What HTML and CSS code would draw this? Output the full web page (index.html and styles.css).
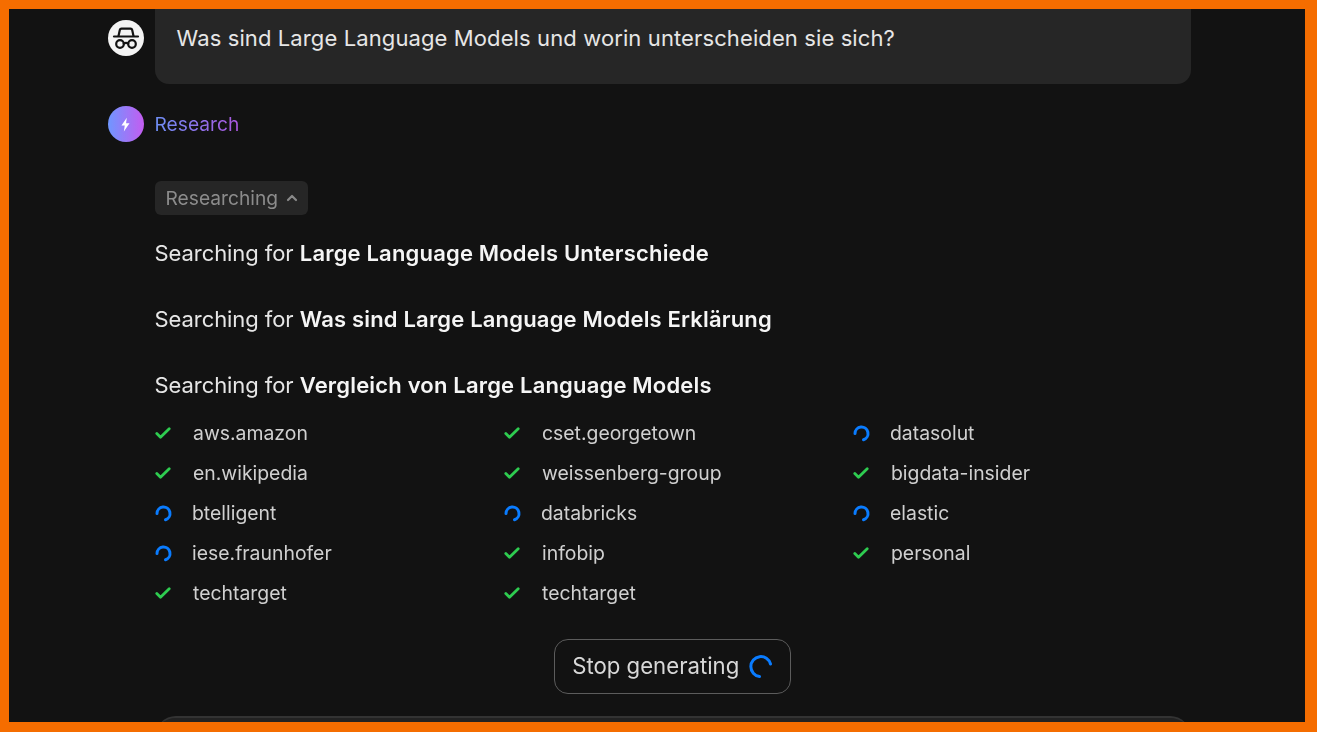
FILE: index.html
```html
<!DOCTYPE html>
<html lang="en">
<head>
  <meta charset="UTF-8" />
  <meta name="viewport" content="width=device-width, initial-scale=1.0" />
  <title>Research</title>
  <link rel="stylesheet" href="styles.css">
</head>
<body>
  <div class="frame">
    <div class="thread">
      <div class="row">
        <div class="avatar avatar-user">
          <svg width="36" height="36" viewBox="0 0 36 36" fill="none" stroke="#121212" stroke-width="2.2" stroke-linecap="round" stroke-linejoin="round">
            <path d="M6 16.500h24" />
            <path d="M10.500 16l1.300-6c.2-.9.8-1.300 1.700-1.300h9c.9 0 1.500.4 1.700 1.300l1.300 6" />
            <circle cx="12" cy="24" r="3.800" />
            <circle cx="24" cy="24" r="3.800" />
            <path d="M15.800 23.500c1.400-.8 3-.8 4.400 0" />
          </svg>
        </div>
        <div class="bubble">Was sind Large Language Models und worin unterscheiden sie sich?</div>
      </div>

      <div class="row row-center answer-head">
        <div class="avatar avatar-bot">
          <svg width="11" height="15" viewBox="0 0 12 16" fill="#fff"><path d="M7.400 0.500L1.600 9h3.600l-1 6.500L10.400 6.600H6.600z" /></svg>
        </div>
        <span class="mode">Research</span>
      </div>

      <div class="answer">
        <div class="chip">Researching
          <svg width="14" height="14" viewBox="0 0 14 14" fill="none" stroke="#8a8a8a" stroke-width="2.2" stroke-linecap="round" stroke-linejoin="round"><path d="M3 9l4-4 4 4" /></svg>
        </div>
        <p class="query"><span>Searching for</span> <b>Large Language Models Unterschiede</b></p>
        <p class="query"><span>Searching for</span> <b>Was sind Large Language Models Erklärung</b></p>
        <p class="query"><span>Searching for</span> <b>Vergleich von Large Language Models</b></p>

        <ul class="sources">
          <li><svg class="check" viewBox="0 0 16 12"><path d="M1.800 6.500l3.700 3.700 8.700-8.400" /></svg>aws.amazon</li>
          <li><svg class="check" viewBox="0 0 16 12"><path d="M1.800 6.500l3.700 3.700 8.700-8.400" /></svg>cset.georgetown</li>
          <li><svg class="spin" viewBox="0 0 17 17"><path d="M2 8.500a6.500 6.500 0 1 1 8.500 6.200" /></svg>datasolut</li>
          <li><svg class="check" viewBox="0 0 16 12"><path d="M1.800 6.500l3.700 3.700 8.700-8.400" /></svg>en.wikipedia</li>
          <li><svg class="check" viewBox="0 0 16 12"><path d="M1.800 6.500l3.700 3.700 8.700-8.400" /></svg>weissenberg-group</li>
          <li><svg class="check" viewBox="0 0 16 12"><path d="M1.800 6.500l3.700 3.700 8.700-8.400" /></svg>bigdata-insider</li>
          <li><svg class="spin" viewBox="0 0 17 17"><path d="M2 8.500a6.500 6.500 0 1 1 8.500 6.200" /></svg>btelligent</li>
          <li><svg class="spin" viewBox="0 0 17 17"><path d="M2 8.500a6.500 6.500 0 1 1 8.500 6.200" /></svg>databricks</li>
          <li><svg class="spin" viewBox="0 0 17 17"><path d="M2 8.500a6.500 6.500 0 1 1 8.500 6.200" /></svg>elastic</li>
          <li><svg class="spin" viewBox="0 0 17 17"><path d="M2 8.500a6.500 6.500 0 1 1 8.500 6.200" /></svg>iese.fraunhofer</li>
          <li><svg class="check" viewBox="0 0 16 12"><path d="M1.800 6.500l3.700 3.700 8.700-8.400" /></svg>infobip</li>
          <li><svg class="check" viewBox="0 0 16 12"><path d="M1.800 6.500l3.700 3.700 8.700-8.400" /></svg>personal</li>
          <li><svg class="check" viewBox="0 0 16 12"><path d="M1.800 6.500l3.700 3.700 8.700-8.400" /></svg>techtarget</li>
          <li><svg class="check" viewBox="0 0 16 12"><path d="M1.800 6.500l3.700 3.700 8.700-8.400" /></svg>techtarget</li>
        </ul>

        <div class="stop-wrap">
          <button class="stop">Stop generating
            <svg width="24" height="24" viewBox="0 0 24 24" fill="none" stroke="#0a7cff" stroke-width="3" stroke-linecap="round"><path d="M10.500 21.500A10 10 0 1 1 21.500 9" /></svg>
          </button>
        </div>

        <div class="composer"></div>
      </div>
    </div>
  </div>
</body>
</html>
```

FILE: styles.css
```css
html, body {
  margin: 0;
  height: 100%;
}
body {
  background: #f56d00;
  font-family: Inter, 'Noto Sans', sans-serif;
  color: #e6e6e6;
}
.frame {
  box-sizing: border-box;
  width: 1296px;
  height: 713px;
  margin: 9px 0 0 9px;
  background: #121212;
  overflow: hidden;
}
.thread {
  width: 1083.5px;
  margin-left: 98.5px;
  filter: blur(0.35px);
}
.row {
  display: flex;
  gap: 11px;
  align-items: flex-start;
}
.row-center {
  align-items: center;
}
.avatar {
  flex: none;
  width: 36px;
  height: 36px;
  border-radius: 50%;
  display: flex;
  align-items: center;
  justify-content: center;
}
.avatar-user {
  background: #f4f4f4;
  margin-top: 11px;
}
.avatar-bot {
  background: linear-gradient(90deg, #6f97ff, #c45cf0);
}
.bubble {
  flex: 1;
  height: 74.5px;
  box-sizing: border-box;
  padding: 14px 22px 0;
  background: #262626;
  border-radius: 0 0 14px 14px;
  font-size: 22px;
  line-height: 30px;
  letter-spacing: 0.11px;
}
.answer-head {
  margin-top: 22.5px;
}
.mode {
  font-size: 19.2px;
  background: linear-gradient(90deg, #6f8ff5, #ab57e0);
  -webkit-background-clip: text;
  background-clip: text;
  color: transparent;
}
.answer {
  margin-left: 47px;
  margin-top: 39px;
}
.chip {
  display: inline-flex;
  align-items: center;
  gap: 7px;
  height: 34px;
  padding: 0 9px 0 11px;
  background: #262626;
  border-radius: 6px;
  font-size: 19.2px;
  color: #8c8c8c;
}
.query {
  margin: 0 0 36px;
  font-size: 22px;
  line-height: 30px;
  color: #e6e6e6;
}
.chip + .query {
  margin-top: 23px;
}
.query span {
  letter-spacing: -0.07px;
}
.query b {
  font-weight: 600;
  letter-spacing: 0.18px;
  color: #f5f5f5;
}
.sources {
  list-style: none;
  margin: -23px 0 0;
  padding: 0;
  display: grid;
  grid-template-columns: repeat(3, 349px);
  grid-auto-rows: 40px;
}
.sources li {
  display: flex;
  align-items: center;
  gap: 22.5px;
  font-size: 19.4px;
  color: #d0d0d0;
}
.check {
  width: 16px;
  height: 12px;
  fill: none;
  stroke: #2ecc50;
  stroke-width: 2.8;
  stroke-linecap: round;
  stroke-linejoin: round;
}
.sources li:has(.spin) {
  gap: 20.5px;
}
.spin {
  width: 17px;
  height: 17px;
  fill: none;
  stroke: #0a7cff;
  stroke-width: 3;
  stroke-linecap: round;
}
.stop-wrap {
  display: flex;
  justify-content: center;
  margin-top: 26px;
}
.stop {
  display: flex;
  align-items: center;
  gap: 10px;
  height: 55px;
  padding: 0 17px 2px 17px;
  background: #121212;
  border: 1px solid #5c5c5c;
  border-radius: 14px;
  font-family: inherit;
  font-size: 22.2px;
  color: #d8d8d8;
}
.stop svg {
  margin-top: 2px;
}
.composer {
  margin-top: 22px;
  height: 40px;
  background: #222;
  border-radius: 24px;
  border-top: 2px solid #333;
}
```
